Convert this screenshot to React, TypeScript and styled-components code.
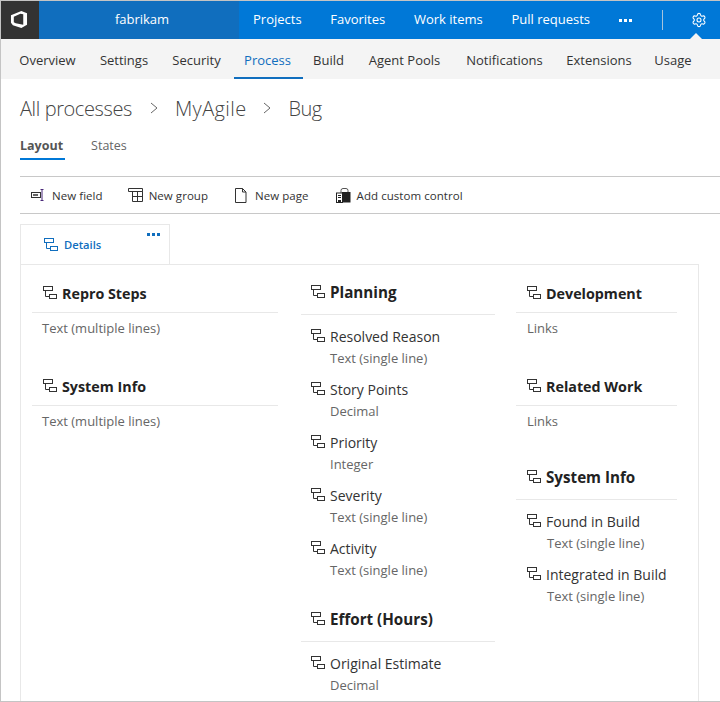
import React from "react";
import styled, { createGlobalStyle } from "styled-components";
import { Settings } from "lucide-react";

const Global = createGlobalStyle`
  html, body { margin: 0; padding: 0; background: #fff; }
  body { font-family: "Open Sans", "Noto Sans", "Liberation Sans", sans-serif; }
  * { box-sizing: border-box; }
`;

const Frame = styled.div`
  width: 720px; height: 702px; overflow: hidden; background: #fff;
  border-top: 1px solid #c4c4c4; border-left: 1px solid #c4c4c4; border-bottom: 1px solid #c4c4c4;
  display: flex; flex-direction: column;
`;
const TopBar = styled.header`
  height: 38px; background: #0078d7; display: flex; align-items: stretch; flex: none; position: relative;
`;
const LogoBlock = styled.div`
  width: 38px; background: #333; display: flex; align-items: center; justify-content: center; flex: none; padding: 0 3px 2px 0;
`;
const Account = styled.div`
  width: 200px; background: #106ebe; color: #fff; font-size: 13px; display: flex; align-items: center; justify-content: center; flex: none; padding: 0 0 2px 6px;
`;
const TopNav = styled.nav`
  display: flex; align-items: center; gap: 28.7px; padding: 0 0 2px 14px; color: #fff; font-size: 13px; flex: none; width: 422px;
`;
const More = styled.svg`
  display: block; flex: none; margin: 2px 0 0 0;
`;
const TopRight = styled.div`
  flex: 1; display: flex; align-items: center; justify-content: flex-start; position: relative; padding: 0 0 1px 1px;
`;
const VSep = styled.div`
  width: 1px; height: 20px; background: #a6c4dc; margin-right: 28px;
`;
const GearCaret = styled.div`
  position: absolute; left: 29px; bottom: 0; width: 0; height: 0;
  border-left: 6px solid transparent; border-right: 6px solid transparent; border-bottom: 6px solid #f4f4f4;
`;
const SubNav = styled.nav`
  height: 40px; background: #f4f4f4; flex: none; display: flex; align-items: stretch; gap: 3px; padding-left: 8px; font-size: 13px; color: #333;
`;
const SubItem = styled.div<{ $active?: boolean; $w: number }>`
  width: ${(p) => p.$w}px; display: flex; align-items: center; justify-content: center; flex: none; white-space: nowrap;
  color: ${(p) => (p.$active ? "#106ebe" : "#333")};
  border-bottom: 2px solid ${(p) => (p.$active ? "#106ebe" : "transparent")};
  padding: 3px ${(p) => (p.$active ? 2 : 0)}px 0 0;
`;
const Crumbs = styled.div`
  display: flex; align-items: center; height: 58px; padding: 0 0 0 19px; font-size: 20px; font-weight: 300; color: #444; flex: none;
`;
const Crumb = styled.span<{ $ls: number }>`
  flex: none; letter-spacing: ${(p) => p.$ls}px;
`;
const Chevron = styled.svg<{ $ml: number; $mr: number }>`
  display: block; flex: none; margin: 0 ${(p) => p.$mr}px 0 ${(p) => p.$ml}px;
`;
const PivotRow = styled.div`
  display: flex; gap: 26px; padding-left: 19px; height: 23px; flex: none; font-size: 12.5px;
`;
const Pivot = styled.div<{ $active?: boolean }>`
  height: 23px; line-height: 18px; padding: 0 2px 0 0; color: ${(p) => (p.$active ? "#555" : "#666")};
  font-weight: ${(p) => (p.$active ? 700 : 400)};
  border-bottom: 2px solid ${(p) => (p.$active ? "#0078d7" : "transparent")};
`;
const Toolbar = styled.div`
  margin: 16px 0 0 19px; height: 38px; border-top: 1px solid #c8c8c8; border-bottom: 1px solid #c8c8c8;
  display: flex; align-items: center; gap: 25px; padding-left: 11px; flex: none; font-size: 11.5px; letter-spacing: 0.05px; color: #333;
`;
const ToolItem = styled.div<{ $extra?: number }>`
  display: flex; align-items: center; gap: 6px; flex: none; margin-right: ${(p) => p.$extra ?? 0}px;
`;
const ToolIcon = styled.svg`
  display: block; flex: none;
`;
const TabRow = styled.div`
  margin: 10px 0 -1px 19px; height: 41px; flex: none; position: relative; z-index: 1;
`;
const Tab = styled.div`
  width: 150px; height: 41px; background: #fff; border: 1px solid #e8e8e8;
  display: flex; align-items: center; padding: 0 0 0 23px; gap: 6px; color: #106ebe; font-size: 11.2px; font-weight: 600; position: relative;
`;
const TabDots = styled.svg`
  position: absolute; right: 9px; top: 8px; display: block;
`;
const Panel = styled.section`
  margin-left: 19px; width: 679px; flex: 1; border: 1px solid #e8e8e8; border-bottom: 0;
  display: flex; padding-left: 11px; overflow: hidden; min-height: 0;
`;
const Column = styled.div<{ $w: number; $ml: number; $pt: number }>`
  width: ${(p) => p.$w}px; margin-left: ${(p) => p.$ml}px; padding-top: ${(p) => p.$pt}px; flex: none; display: flex; flex-direction: column;
`;
const Group = styled.div<{ $mt?: number }>`
  margin-top: ${(p) => p.$mt ?? 0}px; flex: none;
`;
const GroupHead = styled.div<{ $h: number; $inset: number; $fs: number }>`
  height: ${(p) => p.$h}px; border-bottom: 1px solid #e8e8e8; display: flex; align-items: center; padding: 0 0 1px ${(p) => p.$inset}px; gap: 5px;
  font-size: ${(p) => p.$fs}px; font-weight: 700; color: #222;
`;
const GroupName = styled.span`
  flex: none;
`;
const LayoutIcon = styled.svg`
  display: block; flex: none;
`;
const PlainText = styled.div<{ $left: number }>`
  height: 20px; line-height: 20px; margin-top: 5px; padding-left: ${(p) => p.$left}px; font-size: 13px; color: #666;
`;
const Fields = styled.div<{ $inset: number }>`
  padding: 10px 0 0 ${(p) => p.$inset}px; display: flex; flex-direction: column; gap: 10px;
`;
const Field = styled.div`
  flex: none;
`;
const FieldName = styled.div`
  height: 22px; display: flex; align-items: center; gap: 5px; font-size: 14px; color: #333;
`;
const FieldType = styled.div<{ $left: number }>`
  height: 21px; line-height: 20px; padding: 1px 0 0 ${(p) => p.$left}px; font-size: 13px; color: #666;
`;

const LIcon = ({ color = "#333" }: { color?: string }) => (
  <LayoutIcon width="14" height="14" viewBox="0 0 14 14" fill="none" stroke={color} strokeWidth="1">
    <rect x="0.5" y="0.5" width="9" height="4" />
    <path d="M2.5 4.5V10.5H6.5" />
    <rect x="6.5" y="8.5" width="7" height="4" />
  </LayoutIcon>
);

const Dots = ({ color }: { color: string }) => (
  <>
    <rect x="0" y="0" width="3" height="3" fill={color} />
    <rect x="5" y="0" width="3" height="3" fill={color} />
    <rect x="10" y="0" width="3" height="3" fill={color} />
  </>
);

const PlainGroup = ({ name, text, mt, inset, left }: { name: string; text: string; mt?: number; inset: number; left: number }) => (
  <Group $mt={mt}>
    <GroupHead $h={38} $inset={inset} $fs={14.3}>
      <LIcon />
      <GroupName>{name}</GroupName>
    </GroupHead>
    <PlainText $left={left}>{text}</PlainText>
  </Group>
);

const FieldGroup = ({ name, fields, mt, inset, left }: { name: string; fields: [string, string][]; mt?: number; inset: number; left: number }) => (
  <Group $mt={mt}>
    <GroupHead $h={44} $inset={inset} $fs={15.2}>
      <LIcon />
      <GroupName>{name}</GroupName>
    </GroupHead>
    <Fields $inset={inset}>
      {fields.map(([n, t]) => (
        <Field key={n}>
          <FieldName>
            <LIcon />
            {n}
          </FieldName>
          <FieldType $left={left}>{t}</FieldType>
        </Field>
      ))}
    </Fields>
  </Group>
);

const sub: [string, number, boolean?][] = [
  ["Overview", 77], ["Settings", 70], ["Security", 69], ["Process", 69, true], ["Build", 45],
  ["Agent Pools", 101], ["Notifications", 93], ["Extensions", 90], ["Usage", 52],
];

const Chev = ({ ml, mr }: { ml: number; mr: number }) => (
  <Chevron $ml={ml} $mr={mr} width="8" height="12" viewBox="0 0 8 12" fill="none" stroke="#666"><path d="M1 1l6 5-6 5" /></Chevron>
);

export default function App() {
  return (
    <>
      <Global />
      <Frame>
        <TopBar>
          <LogoBlock>
            <svg width="18" height="17" viewBox="1 0.5 17 18">
              <path fillRule="evenodd" fill="#fff" d="M1 5 L12 0.5 L18 3 V15 L12 18.5 L3 15.5 L1 13 Z M4 6.5 V12.5 L6 13.5 L14 15 V4 L11 3.5 Z" />
            </svg>
          </LogoBlock>
          <Account>fabrikam</Account>
          <TopNav>
            <span>Projects</span>
            <span>Favorites</span>
            <span>Work items</span>
            <span>Pull requests</span>
            <More width="13" height="3" viewBox="0 0 13 3"><Dots color="#fff" /></More>
          </TopNav>
          <TopRight>
            <VSep />
            <Settings size={16} color="#fff" strokeWidth={1.6} />
            <GearCaret />
          </TopRight>
        </TopBar>
        <SubNav>
          {sub.map(([t, w, a]) => (
            <SubItem key={t} $w={w} $active={a}>{t}</SubItem>
          ))}
        </SubNav>
        <Crumbs>
          <Crumb $ls={-0.4}>All processes</Crumb>
          <Chev ml={18} mr={17} />
          <Crumb $ls={0.4}>MyAgile</Crumb>
          <Chev ml={16} mr={18} />
          <Crumb $ls={-0.6}>Bug</Crumb>
        </Crumbs>
        <PivotRow>
          <Pivot $active>Layout</Pivot>
          <Pivot>States</Pivot>
        </PivotRow>
        <Toolbar>
          <ToolItem>
            <ToolIcon width="15" height="14" viewBox="0 0 15 14" fill="none" stroke="#333">
              <rect x="0.5" y="4.5" width="9" height="5" />
              <path d="M2 7h5" strokeWidth="1.5" />
              <path d="M9.5 1.5h3M9.5 12.5h3M11 1.5v11" stroke="#4b2a7a" />
            </ToolIcon>
            New field
          </ToolItem>
          <ToolItem $extra={1}>
            <ToolIcon width="15" height="14" viewBox="0 0 15 14" fill="none" stroke="#333">
              <path d="M0.5 0.5h14v3h-14z" />
              <path d="M4.5 3.5h10v10h-10zM4.5 8.5h10M9.5 3.5v10" />
            </ToolIcon>
            New group
          </ToolItem>
          <ToolItem $extra={2}>
            <ToolIcon width="15" height="15" viewBox="0 0 15 15" fill="none" stroke="#333">
              <path d="M1.5 0.5h7l3.5 3.5v10.5h-10.5zM8.5 0.5v3.5h3.5" />
            </ToolIcon>
            New page
          </ToolItem>
          <ToolItem>
            <ToolIcon width="15" height="15" viewBox="0 0 15 15">
              <path d="M5 5V2.5a2 2 0 0 1 2-2h3a2 2 0 0 1 2 2V5" fill="none" stroke="#555" />
              <rect x="0.5" y="5" width="6" height="9.5" fill="#fff" stroke="#222" />
              <rect x="2" y="7" width="3" height="1" fill="#222" />
              <rect x="2" y="9" width="3" height="1" fill="#222" />
              <rect x="2" y="12" width="3" height="2" fill="#222" />
              <rect x="6" y="4" width="8.5" height="10.5" fill="#222" />
            </ToolIcon>
            Add custom control
          </ToolItem>
        </Toolbar>
        <TabRow>
          <Tab>
            <LIcon color="#106ebe" />
            Details
            <TabDots width="13" height="3" viewBox="0 0 13 3"><Dots color="#106ebe" /></TabDots>
          </Tab>
        </TabRow>
        <Panel>
          <Column $w={246} $ml={0} $pt={10}>
            <PlainGroup name="Repro Steps" text="Text (multiple lines)" inset={11} left={10} />
            <PlainGroup name="System Info" text="Text (multiple lines)" mt={30} inset={11} left={10} />
          </Column>
          <Column $w={194} $ml={23} $pt={6}>
            <FieldGroup
              name="Planning"
              inset={10}
              left={19}
              fields={[
                ["Resolved Reason", "Text (single line)"],
                ["Story Points", "Decimal"],
                ["Priority", "Integer"],
                ["Severity", "Text (single line)"],
                ["Activity", "Text (single line)"],
              ]}
            />
            <FieldGroup name="Effort (Hours)" inset={10} left={19} mt={18} fields={[["Original Estimate", "Decimal"]]} />
          </Column>
          <Column $w={161} $ml={21} $pt={10}>
            <PlainGroup name="Development" text="Links" mt={0} inset={11} left={11} />
            <PlainGroup name="Related Work" text="Links" mt={30} inset={11} left={11} />
            <FieldGroup
              name="System Info"
              inset={11}
              left={20}
              mt={25}
              fields={[
                ["Found in Build", "Text (single line)"],
                ["Integrated in Build", "Text (single line)"],
              ]}
            />
          </Column>
        </Panel>
      </Frame>
    </>
  );
}
